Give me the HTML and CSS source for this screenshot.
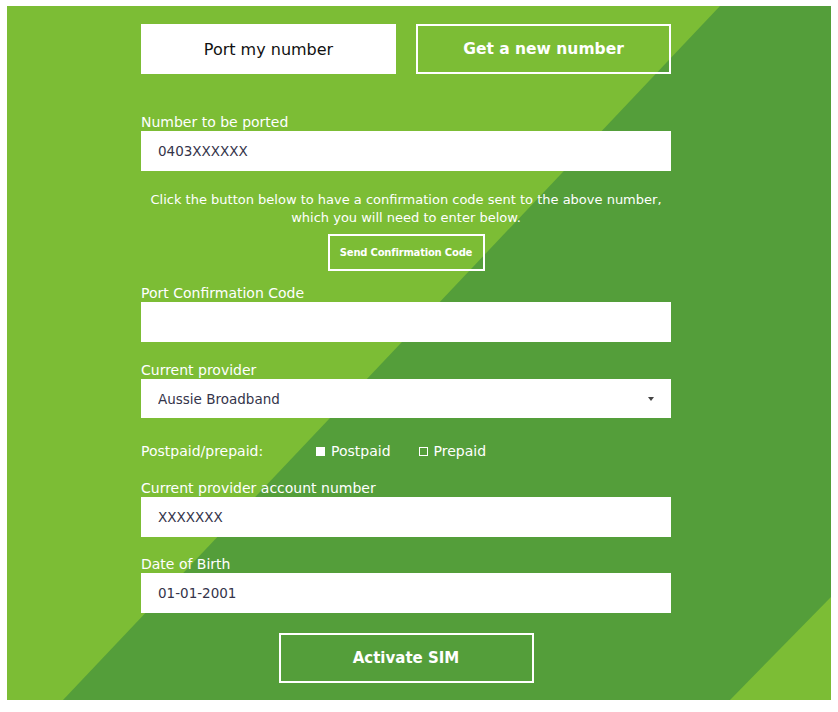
FILE: index.html
```html
<!DOCTYPE html>
<html lang="en">
<head>
  <meta charset="UTF-8">
  <meta name="viewport" content="width=device-width, initial-scale=1.0">
  <title>Port my number</title>
  <link rel="stylesheet" href="styles.css">
</head>
<body>
  <div class="panel">
    <form class="port-form">
      <div class="tabs">
        <button type="button" class="tab tab-active">Port my number</button>
        <button type="button" class="tab">Get a new number</button>
      </div>

      <div class="field field-first">
        <label for="portNumber">Number to be ported</label>
        <input id="portNumber" type="text" value="0403XXXXXX">
      </div>

      <p class="hint">
        Click the button below to have a confirmation code sent to the above number,<br>
        which you will need to enter below.
      </p>
      <button type="button" class="btn-outline btn-send">Send Confirmation Code</button>

      <div class="field field-code">
        <label for="portCode">Port Confirmation Code</label>
        <input id="portCode" type="text" value="">
      </div>

      <div class="field">
        <label for="provider">Current provider</label>
        <div class="select-wrap">
          <select id="provider">
            <option>Aussie Broadband</option>
            <option>Optus</option>
            <option>Telstra</option>
            <option>Vodafone</option>
          </select>
        </div>
      </div>

      <div class="plan-row">
        <span class="plan-label">Postpaid/prepaid:</span>
        <label class="choice"><input type="radio" name="plan" checked>Postpaid</label>
        <label class="choice"><input type="radio" name="plan">Prepaid</label>
      </div>

      <div class="field">
        <label for="account">Current provider account number</label>
        <input id="account" type="text" value="XXXXXXX">
      </div>

      <div class="field field-dob">
        <label for="dob">Date of Birth</label>
        <input id="dob" type="text" value="01-01-2001">
      </div>

      <button type="button" class="btn-outline btn-activate">Activate SIM</button>
    </form>
  </div>
</body>
</html>
```

FILE: styles.css
```css
body {
  margin: 0;
  padding: 6px 7px 0;
  background-color: #fff;
  font-family: "DejaVu Sans", Arial, sans-serif;
}

.panel {
  position: relative;
  width: 824px;
  height: 694px;
  background-color: #7cbd35;
  overflow: hidden;
}

/* dark diagonal band behind the form */
.panel::before {
  content: "";
  position: absolute;
  inset: 0;
  background-color: #549e3a;
  clip-path: polygon(713px 0, 824px 0, 824px 591px, 723px 694px, 56px 694px);
}

.port-form {
  position: relative;
  width: 530px;
  margin-left: 134px;
  padding-top: 18px;
  display: flex;
  flex-direction: column;
}

.tabs {
  display: flex;
  gap: 20px;
}

.tab {
  flex: 1;
  height: 50px;
  border: 2px solid #fff;
  background: transparent;
  color: #fff;
  font-family: inherit;
  font-size: 15.5px;
  font-weight: bold;
  cursor: pointer;
}

.tab-active {
  background-color: #fff;
  color: #111;
  font-size: 16px;
  font-weight: normal;
}

.field {
  margin-top: 19px;
}

.field-first {
  margin-top: 39px;
}

.field-code {
  margin-top: 13px;
}

.field label {
  display: block;
  color: #fff;
  font-size: 14px;
  line-height: 18px;
}

.field input,
.field select {
  display: block;
  width: 100%;
  height: 40px;
  box-sizing: border-box;
  border: 0;
  border-radius: 0;
  padding: 0 17px;
  background-color: #fff;
  color: #34344a;
  font-family: inherit;
  font-size: 13.5px;
  outline: none;
}

.select-wrap {
  position: relative;
}

.field select {
  height: 39px;
  appearance: none;
  -webkit-appearance: none;
}

.select-wrap::after {
  content: "";
  position: absolute;
  right: 17px;
  top: 18px;
  border-left: 3px solid transparent;
  border-right: 3px solid transparent;
  border-top: 4px solid #444;
  pointer-events: none;
}

.hint {
  margin: 20px 0 0;
  color: #fff;
  font-size: 13px;
  line-height: 18px;
  text-align: center;
}

.btn-outline {
  display: block;
  margin: 0 auto;
  padding: 0;
  border: 2px solid #fff;
  background: transparent;
  color: #fff;
  font-family: inherit;
  font-weight: bold;
  white-space: nowrap;
  cursor: pointer;
}

.btn-send {
  margin-top: 7px;
  width: 157px;
  height: 37px;
  font-size: 10px;
  letter-spacing: -0.2px;
}

.btn-activate {
  margin-top: 20px;
  width: 255px;
  height: 50px;
  font-size: 15px;
}

.plan-row {
  margin-top: 24px;
  display: flex;
  align-items: center;
  height: 18px;
  color: #fff;
  font-size: 14px;
}

.plan-label {
  width: 175px;
}

.choice {
  display: flex;
  align-items: center;
  margin-right: 28px;
}

.choice input {
  appearance: none;
  -webkit-appearance: none;
  width: 9px;
  height: 9px;
  margin: 0 6px 0 0;
  border: 1px solid #fff;
  border-radius: 0;
  background: transparent;
}

.choice input:checked {
  background-color: #fff;
}

.field-dob {
  margin-top: 18px;
}
```
